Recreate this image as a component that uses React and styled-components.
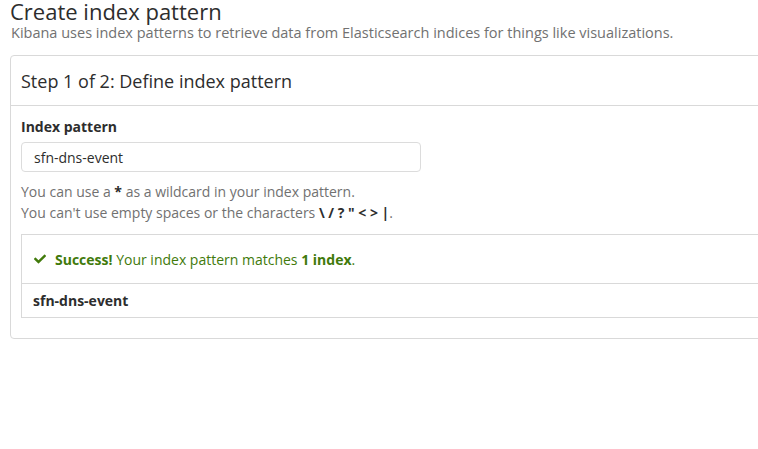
import React from 'react'
import styled, {createGlobalStyle} from 'styled-components'
import {FaCheck} from 'react-icons/fa'

const GlobalStyle = createGlobalStyle`
    html, body {
        margin: 0;
        padding: 0;
        background: #fff;
        overflow: hidden;
    }
    body {
        font-family: "Open Sans", "DejaVu Sans", sans-serif;
        color: #333;
    }
`;

const Page = styled.div`
    width: 900px;
    padding: 0 0 0 10px;
`;

const Title = styled.h1`
    margin: 0;
    font-size: 22px;
    line-height: 22px;
    font-weight: 400;
    color: #2d2d2d;
`;

const Subtitle = styled.p`
    margin: 2px 0 13px 1px;
    font-size: 14.5px;
    line-height: 18px;
    color: #717171;
`;

const Panel = styled.div`
    border: 1px solid #d9d9d9;
    border-radius: 4px;
`;

const PanelHeader = styled.div`
    display: flex;
    align-items: center;
    height: 49px;
    padding: 0 10px;
    border-bottom: 1px solid #d9d9d9;
    font-size: 18px;
    color: #2d2d2d;
`;

const PanelBody = styled.div`
    padding: 10px 10px 20px;
`;

const Label = styled.label`
    display: block;
    font-size: 14px;
    line-height: 21px;
    font-weight: 700;
    color: #2d2d2d;
`;

const Input = styled.input`
    display: block;
    box-sizing: border-box;
    width: 400px;
    height: 30px;
    margin-top: 5px;
    padding: 0 12px;
    border: 1px solid #dcdcdc;
    border-radius: 4px;
    font-family: inherit;
    font-size: 14px;
    color: #2d2d2d;
    outline: none;
`;

const Help = styled.p`
    margin: 9px 0 11px;
    font-size: 14px;
    line-height: 21px;
    color: #717171;

    strong {
        color: #2d2d2d;
    }
`;

const ResultBox = styled.div`
    border: 1px solid #d9d9d9;
    border-right: none;
`;

const ResultRow = styled.div`
    display: flex;
    align-items: center;
    height: ${props => props.height}px;
    padding: 0 11px;
    font-size: 14px;
    color: ${props => props.color || '#2d2d2d'};
    font-weight: ${props => props.bold ? 700 : 400};

    & + & {
        border-top: 1px solid #d9d9d9;
    }
`;

const CheckIcon = styled(FaCheck)`
    width: 12px;
    height: 12px;
    margin-right: 9px;
    margin-left: 1px;
`;

const Good = styled.span`
    white-space: pre;

    strong {
        font-weight: 700;
    }
`;

export default function App() {
    return (
        <React.Fragment>
            <GlobalStyle/>
            <Page>
                <Title>Create index pattern</Title>
                <Subtitle>Kibana uses index patterns to retrieve data from Elasticsearch indices for things like visualizations.</Subtitle>
                <Panel>
                    <PanelHeader>Step 1 of 2: Define index pattern</PanelHeader>
                    <PanelBody>
                        <Label>Index pattern</Label>
                        <Input defaultValue="sfn-dns-event" readOnly/>
                        <Help>
                            You can use a <strong>*</strong> as a wildcard in your index pattern.<br/>
                            You can't use empty spaces or the characters <strong>\ / ? " &lt; &gt; |</strong>.
                        </Help>
                        <ResultBox>
                            <ResultRow height={48} color="#417a0b">
                                <CheckIcon/>
                                <Good><strong>Success!</strong> Your index pattern matches <strong>1 index</strong>.</Good>
                            </ResultRow>
                            <ResultRow height={33} bold>sfn-dns-event</ResultRow>
                        </ResultBox>
                    </PanelBody>
                </Panel>
            </Page>
        </React.Fragment>
    )
}
